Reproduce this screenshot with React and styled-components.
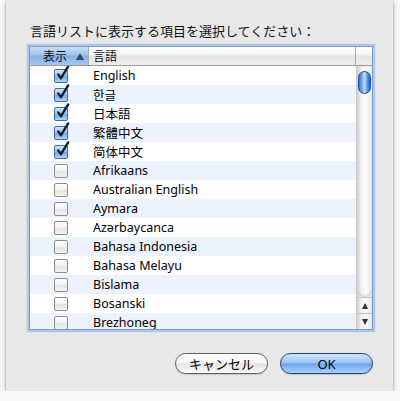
import React from 'react';
import styled, { createGlobalStyle } from 'styled-components';

const GlobalStyle = createGlobalStyle`
  html, body {
    margin: 0;
    padding: 0;
    background: #f8f8f8;
  }
  body {
    font-family: "Lucida Grande", "Noto Sans", "Noto Sans CJK JP", sans-serif;
  }
`;

const languages = [
  { name: 'English', on: true },
  { name: '한글', on: true },
  { name: '日本語', on: true },
  { name: '繁體中文', on: true },
  { name: '简体中文', on: true },
  { name: 'Afrikaans', on: false },
  { name: 'Australian English', on: false },
  { name: 'Aymara', on: false },
  { name: 'Azərbaycanca', on: false },
  { name: 'Bahasa Indonesia', on: false },
  { name: 'Bahasa Melayu', on: false },
  { name: 'Bislama', on: false },
  { name: 'Bosanski', on: false },
  { name: 'Brezhoneg', on: false },
];

const Sheet = styled.div`
  margin-left: 6px;
  width: 387px;
  height: 391px;
  box-sizing: border-box;
  background: #e8e8e8;
  box-shadow: 0 2px 5px rgba(0, 0, 0, 0.3), 0 0 1px rgba(0, 0, 0, 0.35);
  padding: 22px 20px 0 23px;
  display: flex;
  flex-direction: column;
`;

const Prompt = styled.div`
  font-size: 13px;
  line-height: 18px;
  color: #111;
  padding-left: 1px;
  height: 24px;
`;

const Frame = styled.div`
  width: 344px;
  height: 284px;
  box-sizing: border-box;
  border: 1px solid #7e9dc6;
  box-shadow: 0 0 1px 2px rgba(128, 170, 230, 0.55);
  background: #fff;
  display: flex;
  flex-direction: column;
  overflow: hidden;
`;

const Header = styled.div`
  display: grid;
  grid-template-columns: 59px 1fr 16px;
  height: 18px;
  flex: none;
  border-bottom: 1px solid #9a9a9a;
  background: linear-gradient(#ffffff, #f2f2f2 45%, #e3e3e3 50%, #ededed);
  font-size: 12px;
  line-height: 17px;
`;

const HeadCell = styled.div`
  display: flex;
  align-items: center;
  padding: 0 4px;
  border-right: 1px solid #aaa;
  color: #111;
  ${(p) =>
    p.sorted &&
    `
    background: linear-gradient(#c6dcf5, #a3c4ec 45%, #86b0e4 50%, #a5c7f0);
    justify-content: space-between;
    padding: 0 4px 0 13px;
  `}
  &:last-child {
    border-right: none;
  }
`;

const SortArrow = styled.span`
  width: 0;
  height: 0;
  border-left: 4px solid transparent;
  border-right: 4px solid transparent;
  border-bottom: 7px solid #2f4a6d;
`;

const Body = styled.div`
  flex: 1;
  display: flex;
  min-height: 0;
`;

const List = styled.div`
  flex: 1;
  overflow: hidden;
`;

const Row = styled.div`
  display: grid;
  grid-template-columns: 59px 1fr;
  height: 19px;
  align-items: center;
  background: ${(p) => (p.alt ? '#edf3fe' : '#fff')};
  font-size: 12.5px;
  color: #000;
`;

const CheckCell = styled.div`
  display: flex;
  justify-content: center;
  padding-left: 3px;
`;

const Box = styled.div`
  position: relative;
  width: 12px;
  height: 12px;
  border: 1px solid ${(p) => (p.on ? '#4a6a92' : '#8c8c8c')};
  border-radius: 2px;
  background: ${(p) =>
    p.on
      ? 'linear-gradient(#d2e4fa, #96bfee 50%, #76a9e8 55%, #b2d4fa)'
      : 'linear-gradient(#ffffff, #f1f1f1 50%, #e4e4e4 55%, #f4f4f4)'};
  svg {
    position: absolute;
    left: 1px;
    top: -5px;
  }
`;

const Name = styled.div`
  padding-left: 4px;
  white-space: nowrap;
`;

const Scroller = styled.div`
  width: 16px;
  flex: none;
  display: flex;
  flex-direction: column;
  border-left: 1px solid #c8c8c8;
  box-sizing: border-box;
  background: linear-gradient(90deg, #cfcfcf, #f4f4f4 30%, #fbfbfb 60%, #e6e6e6);
`;

const Track = styled.div`
  flex: 1;
  padding: 5px 1px 0 1px;
  border-bottom-left-radius: 7px;
  border-bottom-right-radius: 7px;
  box-shadow: inset 0 -3px 3px -2px rgba(0, 0, 0, 0.2);
`;

const Thumb = styled.div`
  height: 23px;
  border-radius: 7px;
  border: 1px solid #1f4d9c;
  box-sizing: border-box;
  background: linear-gradient(90deg, #2f6fcf, #8ebff4 35%, #bcdafb 50%, #4d8ee6 80%, #2a62bd);
`;

const ArrowBtn = styled.div`
  height: 16px;
  display: flex;
  align-items: center;
  justify-content: center;
  border-top: 1px solid #c4c4c4;
  box-sizing: border-box;
  &::after {
    content: '';
    border-left: 3.5px solid transparent;
    border-right: 3.5px solid transparent;
    ${(p) =>
      p.down ? 'border-top: 6px solid #333;' : 'border-bottom: 6px solid #333;'}
  }
`;

const Footer = styled.div`
  display: flex;
  justify-content: flex-end;
  gap: 12px;
  margin-top: 23px;
`;

const Button = styled.button`
  width: 93px;
  height: 21px;
  border-radius: 11px;
  font-family: "Lucida Grande", "Noto Sans", "Noto Sans CJK JP", sans-serif;
  font-size: 13px;
  line-height: 18px;
  padding: 0;
  color: #000;
  border: 1px solid ${(p) => (p.primary ? '#243f80' : '#5f5f5f')};
  background: ${(p) =>
    p.primary
      ? 'linear-gradient(#d4e6fb, #9cc4f2 45%, #6fa6ea 52%, #a9d0fa)'
      : 'linear-gradient(#ffffff, #f6f6f6 45%, #e4e4e4 52%, #fbfbfb)'};
  box-shadow: 0 1px 1px rgba(0, 0, 0, 0.15);
`;

function Check() {
  return (
    <svg width="14" height="16" viewBox="0 0 14 16">
      <path
        d="M2.2 9.4 L5 13.2 L12.2 1.4"
        fill="none"
        stroke="#0c1a30"
        strokeWidth="2.3"
        strokeLinecap="round"
        strokeLinejoin="round"
      />
    </svg>
  );
}

export default function App() {
  return (
    <>
      <GlobalStyle />
      <Sheet>
        <Prompt>言語リストに表示する項目を選択してください：</Prompt>
        <Frame>
          <Header>
            <HeadCell sorted>
              <span>表示</span>
              <SortArrow />
            </HeadCell>
            <HeadCell>言語</HeadCell>
            <HeadCell />
          </Header>
          <Body>
            <List>
              {languages.map((lang, i) => (
                <Row key={lang.name} alt={i % 2 === 1}>
                  <CheckCell>
                    <Box on={lang.on}>{lang.on && <Check />}</Box>
                  </CheckCell>
                  <Name>{lang.name}</Name>
                </Row>
              ))}
            </List>
            <Scroller>
              <Track>
                <Thumb />
              </Track>
              <ArrowBtn />
              <ArrowBtn down />
            </Scroller>
          </Body>
        </Frame>
        <Footer>
          <Button>キャンセル</Button>
          <Button primary>OK</Button>
        </Footer>
      </Sheet>
    </>
  );
}
